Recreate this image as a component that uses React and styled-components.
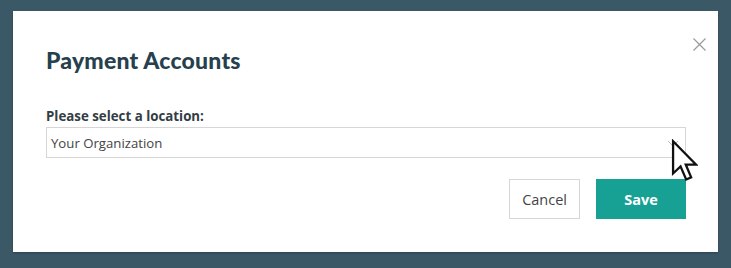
import * as React from 'react';
import styled, {createGlobalStyle} from 'styled-components';

const PAGE_BACK = '#3b5866';
const TITLE_TEXT = '#26404d';
const BODY_TEXT = '#333d44';
const LINE = '#d6d6d6';
const TEAL = '#17a194';

const GlobalStyle = createGlobalStyle`
  html, body {
    margin: 0;
    background: ${PAGE_BACK};
    font-family: "Open Sans", "Noto Sans", sans-serif;
  }
  #root {
    min-height: 268px;
  }
`;

const Page = styled.div`
  padding: 11px 13px 16px 13px;
`;

const Modal = styled.div`
  position: relative;
  box-sizing: border-box;
  width: 705px;
  height: 241px;
  background: #fff;
  padding: 35px 32px 0 33px;
  box-shadow: 0 1px 2px rgba(0, 0, 0, 0.25);
`;

const CloseButton = styled.button`
  position: absolute;
  top: 26px;
  right: 11px;
  width: 15px;
  height: 15px;
  padding: 0;
  border: none;
  background: transparent;
  line-height: 0;
  cursor: pointer;
`;

const Title = styled.h1`
  margin: 0;
  font-family: Lato, "Open Sans", sans-serif;
  font-weight: 900;
  font-size: 23px;
  line-height: 28px;
  color: ${TITLE_TEXT};
  letter-spacing: 0.2px;
`;

const Label = styled.label`
  display: block;
  margin-top: 34px;
  font-weight: 700;
  font-size: 13.3px;
  line-height: 16px;
  color: ${BODY_TEXT};
`;

const SelectBox = styled.div`
  position: relative;
  box-sizing: border-box;
  margin-top: 3px;
  height: 31px;
  border: 1px solid ${LINE};
  display: flex;
  align-items: center;
  justify-content: space-between;
  padding: 0 6px 0 4px;
  font-size: 13.2px;
  color: #444;
`;

const Chevron = styled.svg`
  width: 12px;
  height: 8px;
  margin-top: 2px;
`;

const Cursor = styled.svg`
  position: absolute;
  left: 624px;
  top: 11px;
  width: 27px;
  height: 44px;
`;

const Actions = styled.div`
  display: flex;
  justify-content: flex-end;
  gap: 16px;
  margin-top: 21px;
`;

const Button = styled.button`
  box-sizing: border-box;
  height: 40px;
  min-width: ${(p) => (p.$primary ? '90px' : '70px')};
  padding: 0 12px;
  font-family: "Open Sans", sans-serif;
  font-size: 14.5px;
  font-weight: ${(p) => (p.$primary ? 700 : 400)};
  color: ${(p) => (p.$primary ? '#fff' : '#444')};
  background: ${(p) => (p.$primary ? TEAL : '#fff')};
  border: 1px solid ${(p) => (p.$primary ? TEAL : LINE)};
  cursor: pointer;
`;

function App() {
  return (
    <Page>
      <GlobalStyle />
      <Modal>
        <CloseButton aria-label="Close">
          <svg width="15" height="15" viewBox="0 0 15 15">
            <path d="M1.5 1.5 L13.5 13.5 M13.5 1.5 L1.5 13.5" stroke="#9a9a9a" strokeWidth="1.2" fill="none" />
          </svg>
        </CloseButton>
        <Title>Payment Accounts</Title>
        <Label>Please select a location:</Label>
        <SelectBox>
          Your Organization
          <Chevron viewBox="0 0 12 8">
            <path d="M1 1 L6 6 L11 1" stroke="#b5b5b5" strokeWidth="1" fill="none" />
          </Chevron>
          <Cursor viewBox="0 0 13 21">
            <path
              d="M1 1 L1 16.5 L4.6 13.1 L7.3 19.4 L9.7 18.4 L7.1 12.2 L12 12.2 Z"
              fill="#fff"
              stroke="#111"
              strokeWidth="1.1"
              strokeLinejoin="miter"
            />
          </Cursor>
        </SelectBox>
        <Actions>
          <Button>Cancel</Button>
          <Button $primary>Save</Button>
        </Actions>
      </Modal>
    </Page>
  );
}

export default App;
